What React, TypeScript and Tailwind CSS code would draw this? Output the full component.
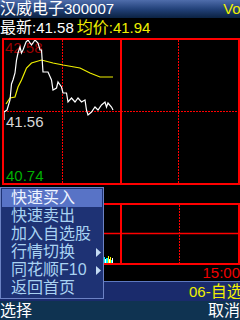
import React from "react";

const cjk = { fontFamily: '"Liberation Sans", "Noto Sans CJK SC", sans-serif' };

const pricePts =
  "4,120 4,112 7,110 10,100 11.5,84 13,80 15,73 16.5,60 18,53 20,47 21.5,53 23,50 26,42 28,40 31.5,45 35,40 38,43 40,50 41.5,50 43,72 48,72 51.5,80 53,90 56.5,88 58,82 61.5,87 63,93 66.5,93 68,102 71.5,98 75,102 78,98 81.5,102 85,100 86.5,110 88,115 91.5,112 95,107 98,110 101.5,105 105,102 106.5,107 108,103 111.5,107 113,110";

const avgPts =
  "6,104 10,98 15,97 18,87 21.5,80 26.5,68 31.5,63 41.5,60 53,63 63,65 80,68 90,73 100,77 113,77";

const menuItems = [
  { label: "快速买入", active: true },
  { label: "快速卖出" },
  { label: "加入自选股" },
  { label: "行情切换", arrow: true },
  { label: "同花顺F10", arrow: true },
  { label: "返回首页" },
];

const PriceChart: React.FC = () => (
  <svg className="absolute inset-0 h-full w-full" viewBox="4 40 234 143" preserveAspectRatio="none">
    <line x1="62.5" y1="40" x2="62.5" y2="183" stroke="#ff0000" strokeWidth="1" strokeDasharray="2 1" />
    <line x1="178.5" y1="40" x2="178.5" y2="183" stroke="#ff0000" strokeWidth="1" strokeDasharray="2 1" />
    <line x1="121" y1="40" x2="121" y2="183" stroke="#ff0000" strokeWidth="2" />
    <line x1="4" y1="111.5" x2="238" y2="111.5" stroke="#ff0000" strokeWidth="1" strokeDasharray="2 1" />
    <text x="5" y="53" fill="#9a0000" fontSize="15" fontFamily="Liberation Sans">42.58</text>
    <polyline points={avgPts} fill="none" stroke="#f0f000" strokeWidth="1.2" />
    <polyline points={pricePts} fill="none" stroke="#ffffff" strokeWidth="1.2" />
    <text x="6" y="127" fill="#d8d8d8" fontSize="15" fontFamily="Liberation Sans">41.56</text>
    <text x="6" y="181" fill="#00b000" fontSize="15" fontFamily="Liberation Sans">40.74</text>
  </svg>
);

const VolumeChart: React.FC = () => (
  <svg className="absolute inset-0 h-full w-full" viewBox="4 205 234 58" preserveAspectRatio="none">
    <line x1="4" y1="233.5" x2="238" y2="233.5" stroke="#ff0000" strokeWidth="1.5" />
    <line x1="121" y1="205" x2="121" y2="263" stroke="#ff0000" strokeWidth="2" />
    <line x1="179.5" y1="205" x2="179.5" y2="263" stroke="#ff0000" strokeWidth="1" strokeDasharray="2 1" />
    <rect x="103" y="257" width="2" height="6" fill="#00ffff" />
    <rect x="105" y="259" width="1" height="4" fill="#ffffff" />
    <rect x="106" y="258" width="2" height="5" fill="#00ffff" />
    <rect x="108" y="256" width="1" height="7" fill="#ffff00" />
    <rect x="109" y="259" width="1" height="4" fill="#ffffff" />
    <rect x="110" y="257" width="1" height="6" fill="#ffff00" />
    <rect x="111" y="260" width="1" height="3" fill="#00ffff" />
    <rect x="112" y="258" width="1" height="5" fill="#ffffff" />
  </svg>
);

const App: React.FC = () => {
  return (
    <div className="relative h-[320px] w-[240px] overflow-hidden bg-black" style={cjk}>
      <div className="flex h-[18px] items-center justify-between bg-gradient-to-b from-[#4f6dab] via-[#23427a] to-[#0b2242] text-[16px] leading-[18px]">
        <span className="whitespace-nowrap text-white">
          汉威电子<span className="text-[15px]">300007</span>
        </span>
        <span className="-mr-[4px] text-[15px] text-[#f0f000]">Vol</span>
      </div>

      <div className="flex h-[20px] items-center whitespace-nowrap text-[16px] leading-[20px]">
        <span className="text-white">
          最新<span className="text-[15px]">:41.58</span>
        </span>
        <span className="ml-[3px] text-[#f0f000]">
          均价<span className="text-[15px]">:41.94</span>
        </span>
      </div>

      <div className="relative ml-[2px] h-[147px] w-[238px] border-2 border-[#ff0000]">
        <PriceChart />
      </div>

      <div className="relative ml-[2px] mt-[18px] h-[62px] w-[238px] border-2 border-[#ff0000]">
        <VolumeChart />
      </div>

      <div className="flex h-[16px] items-center justify-end text-[15px] leading-[16px] text-[#f00000]">
        15:00
      </div>

      <div className="h-[20px] border-t border-[#5d78bf] bg-[#1a2b6c] pl-[189px] text-[16px] leading-[19px] whitespace-nowrap text-[#f0f000]">
        <span className="text-[15px]">06-</span>自选股
      </div>

      <div className="flex h-[19px] items-center justify-between bg-[#0f3351] text-[16px] leading-[19px] text-white">
        <span>选择</span>
        <span>取消</span>
      </div>

      <div className="absolute left-0 top-[187px] w-[104px] border border-[#6c82c4] bg-[#1e3274] p-[1px]">
        {menuItems.map((item) => (
          <div
            key={item.label}
            className={
              item.active
                ? "flex h-[18px] items-center justify-between bg-[#5873c6] pl-[9px] pr-[1px] text-[16px] leading-[18px] text-[#eef4ff]"
                : "flex h-[18px] items-center justify-between pl-[9px] pr-[1px] text-[16px] leading-[18px] text-[#a9d2f2]"
            }
          >
            <span className="whitespace-nowrap">{item.label}</span>
            {item.arrow && (
              <svg width="5" height="9" viewBox="0 0 5 9">
                <polygon points="0,0 5,4.5 0,9" fill="#c4dcf4" />
              </svg>
            )}
          </div>
        ))}
      </div>
    </div>
  );
};

export default App;
